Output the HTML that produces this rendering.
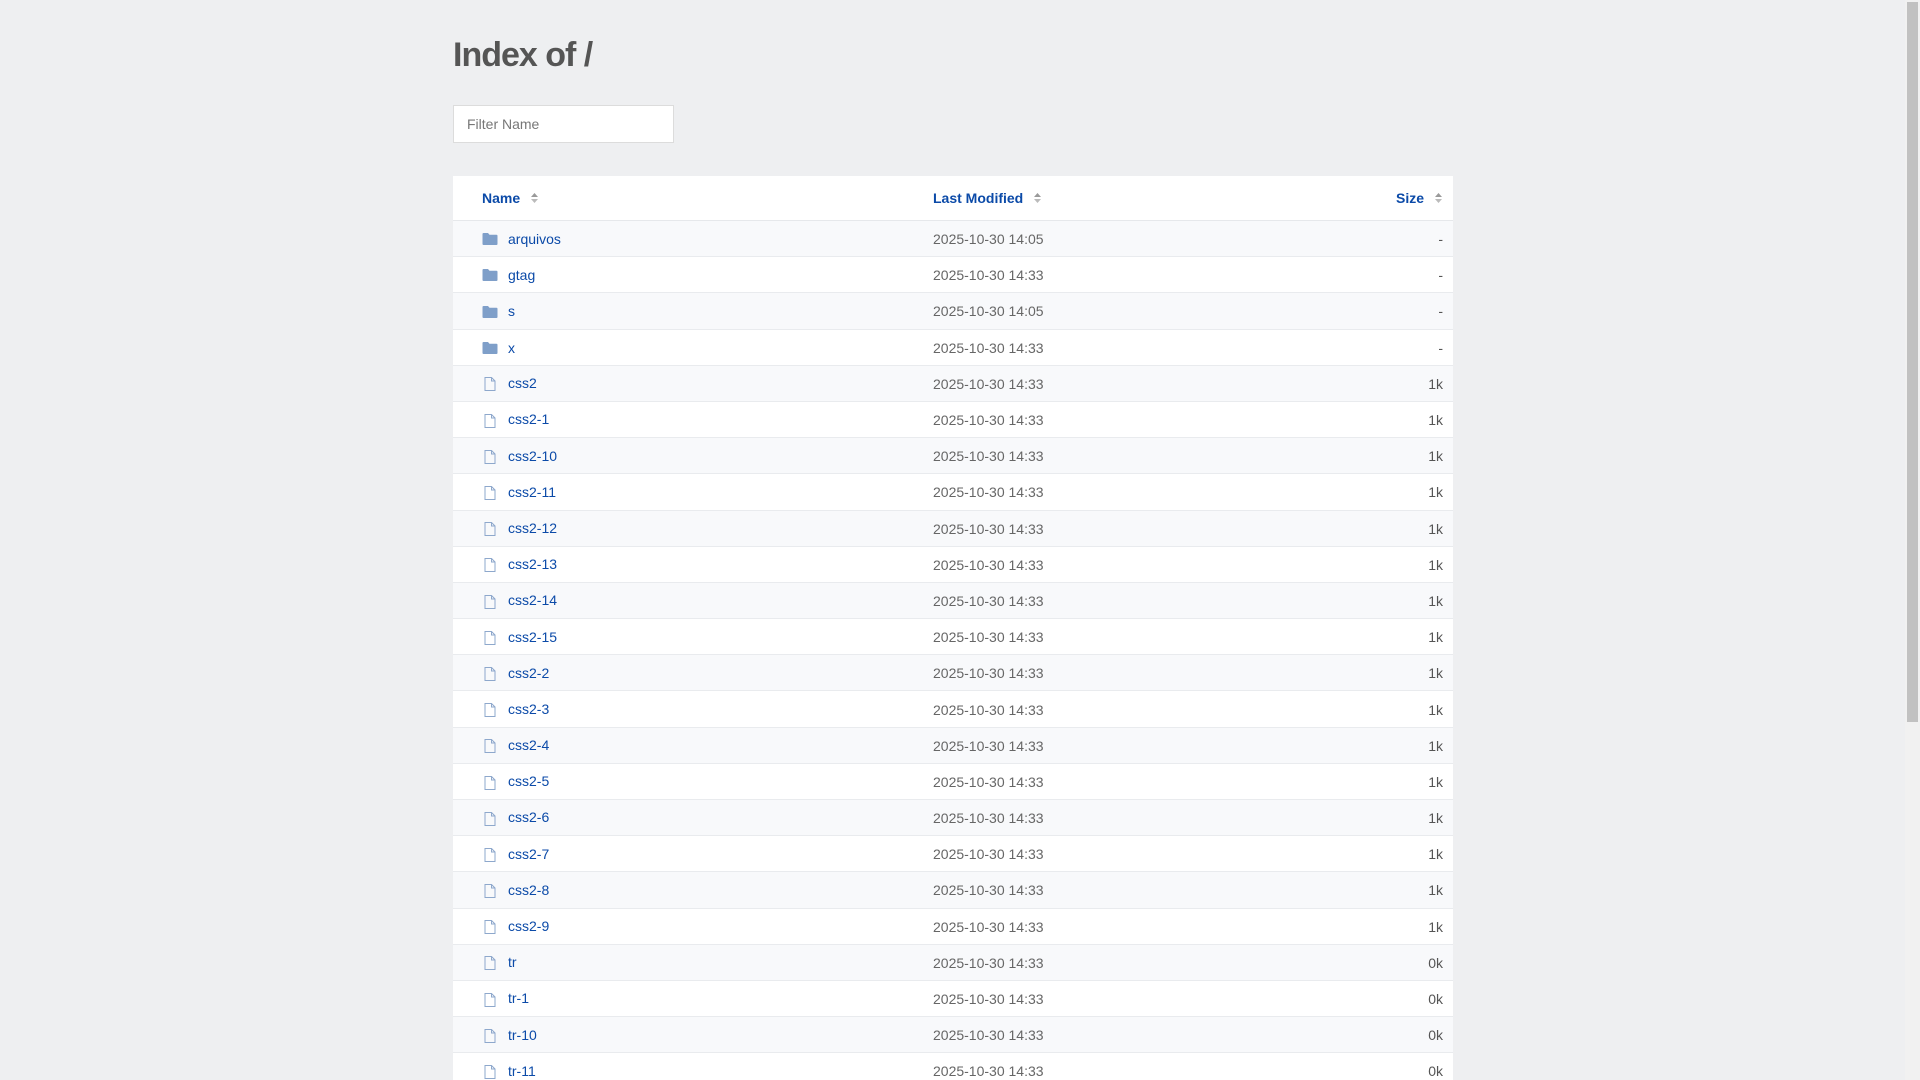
<!DOCTYPE html>
<html><head><meta charset="utf-8"><style>
html,body{margin:0;padding:0;height:1080px;overflow:hidden}
body{background:#eeeff1;font-family:"Liberation Sans",sans-serif;width:1905px;position:relative}
.sb{position:fixed;right:0;top:0;width:15px;height:1080px;background:#f1f1f1}
.sb i{position:absolute;left:2px;top:2px;width:11px;height:720px;background:#c1c1c1}
.wrap{position:absolute;left:453px;top:0;width:1000px;height:1080px;overflow:hidden}
h1{margin:0;position:absolute;top:38px;left:0;font-size:34px;line-height:1;color:#555;font-weight:bold;letter-spacing:-1px}
.inp{position:absolute;top:105px;left:0;height:36px;background:#fff;border:1px solid #dcdcdc;font-size:14px;color:#777;line-height:36px;padding-left:13px;width:206px}
table{position:absolute;top:176px;left:0;width:1000px;border-collapse:collapse;background:#fff;font-size:14px;table-layout:fixed}
th{height:44px;text-align:left;font-weight:bold;color:#0b4aa8;font-size:14px;border-bottom:1px solid #e6e8eb;padding:0}
td{height:34.2px;border-bottom:1px solid #e9ebee;padding:0;padding-top:1px}
tbody tr:nth-child(odd){background:#f8f9fb}
.n{padding-left:29px;width:451px}
.d{width:400px;color:#666}
.s{text-align:right;padding-right:10px;color:#555}
a{color:#0b4aa8;text-decoration:none}
.ic{display:inline-block;width:16px;vertical-align:middle;margin-right:10px;position:relative;top:-1px}
.so{display:inline-block;margin-left:10px;vertical-align:middle;position:relative;top:-1px}
</style></head><body>
<div class="sb"><i></i></div>
<div class="wrap">
<h1>Index of /</h1>
<div class="inp">Filter Name</div>
<table>
<colgroup><col style="width:480px"><col style="width:400px"><col></colgroup>
<thead><tr><th class="n">Name<svg class="so" width="9" height="12" viewBox="0 0 9 12"><path d="M4.5 1L8 5H1z" fill="#9a9a9a"/><path d="M4.5 11L8 7H1z" fill="#bbb"/></svg></th><th class="d" style="color:#0b4aa8">Last Modified<svg class="so" width="9" height="12" viewBox="0 0 9 12"><path d="M4.5 1L8 5H1z" fill="#9a9a9a"/><path d="M4.5 11L8 7H1z" fill="#bbb"/></svg></th><th class="s" style="text-align:right;padding-right:10px;color:#0b4aa8">Size<svg class="so" width="9" height="12" viewBox="0 0 9 12"><path d="M4.5 1L8 5H1z" fill="#9a9a9a"/><path d="M4.5 11L8 7H1z" fill="#bbb"/></svg></th></tr></thead>
<tbody id="tb">
</tbody></table>
</div>
<script>
var F='<svg class="ic" width="16" height="14" viewBox="0 0 16 14"><path d="M1.5 1h4.5l1.5 1.8h7a1 1 0 0 1 1 1V12a1 1 0 0 1-1 1H1.5a1 1 0 0 1-1-1V2a1 1 0 0 1 1-1z" fill="#7f9fc9"/></svg>';
var D='<svg class="ic" width="16" height="16" viewBox="0 0 16 16" style="top:0"><path d="M3 1.5h6.5l3.5 3.5v9.5H3z M9.5 1.5V5H13" fill="none" stroke="#8ea8cc" stroke-width="1"/></svg>';
var rows=[["arquivos",1,"14:05","-"],["gtag",1,"14:33","-"],["s",1,"14:05","-"],["x",1,"14:33","-"],["css2",0,"14:33","1k"],["css2-1",0,"14:33","1k"]];
["10","11","12","13","14","15","2","3","4","5","6","7","8","9"].forEach(function(s){rows.push(["css2-"+s,0,"14:33","1k"])});
["tr","tr-1","tr-10","tr-11","tr-12"].forEach(function(s){rows.push([s,0,"14:33","0k"])});
var h="";rows.forEach(function(r){h+='<tr><td class="n">'+(r[1]?F:D)+'<a>'+r[0]+'</a></td><td class="d">2025-10-30 '+r[2]+'</td><td class="s">'+r[3]+'</td></tr>'});
document.getElementById("tb").innerHTML=h;
</script>
</body></html>
